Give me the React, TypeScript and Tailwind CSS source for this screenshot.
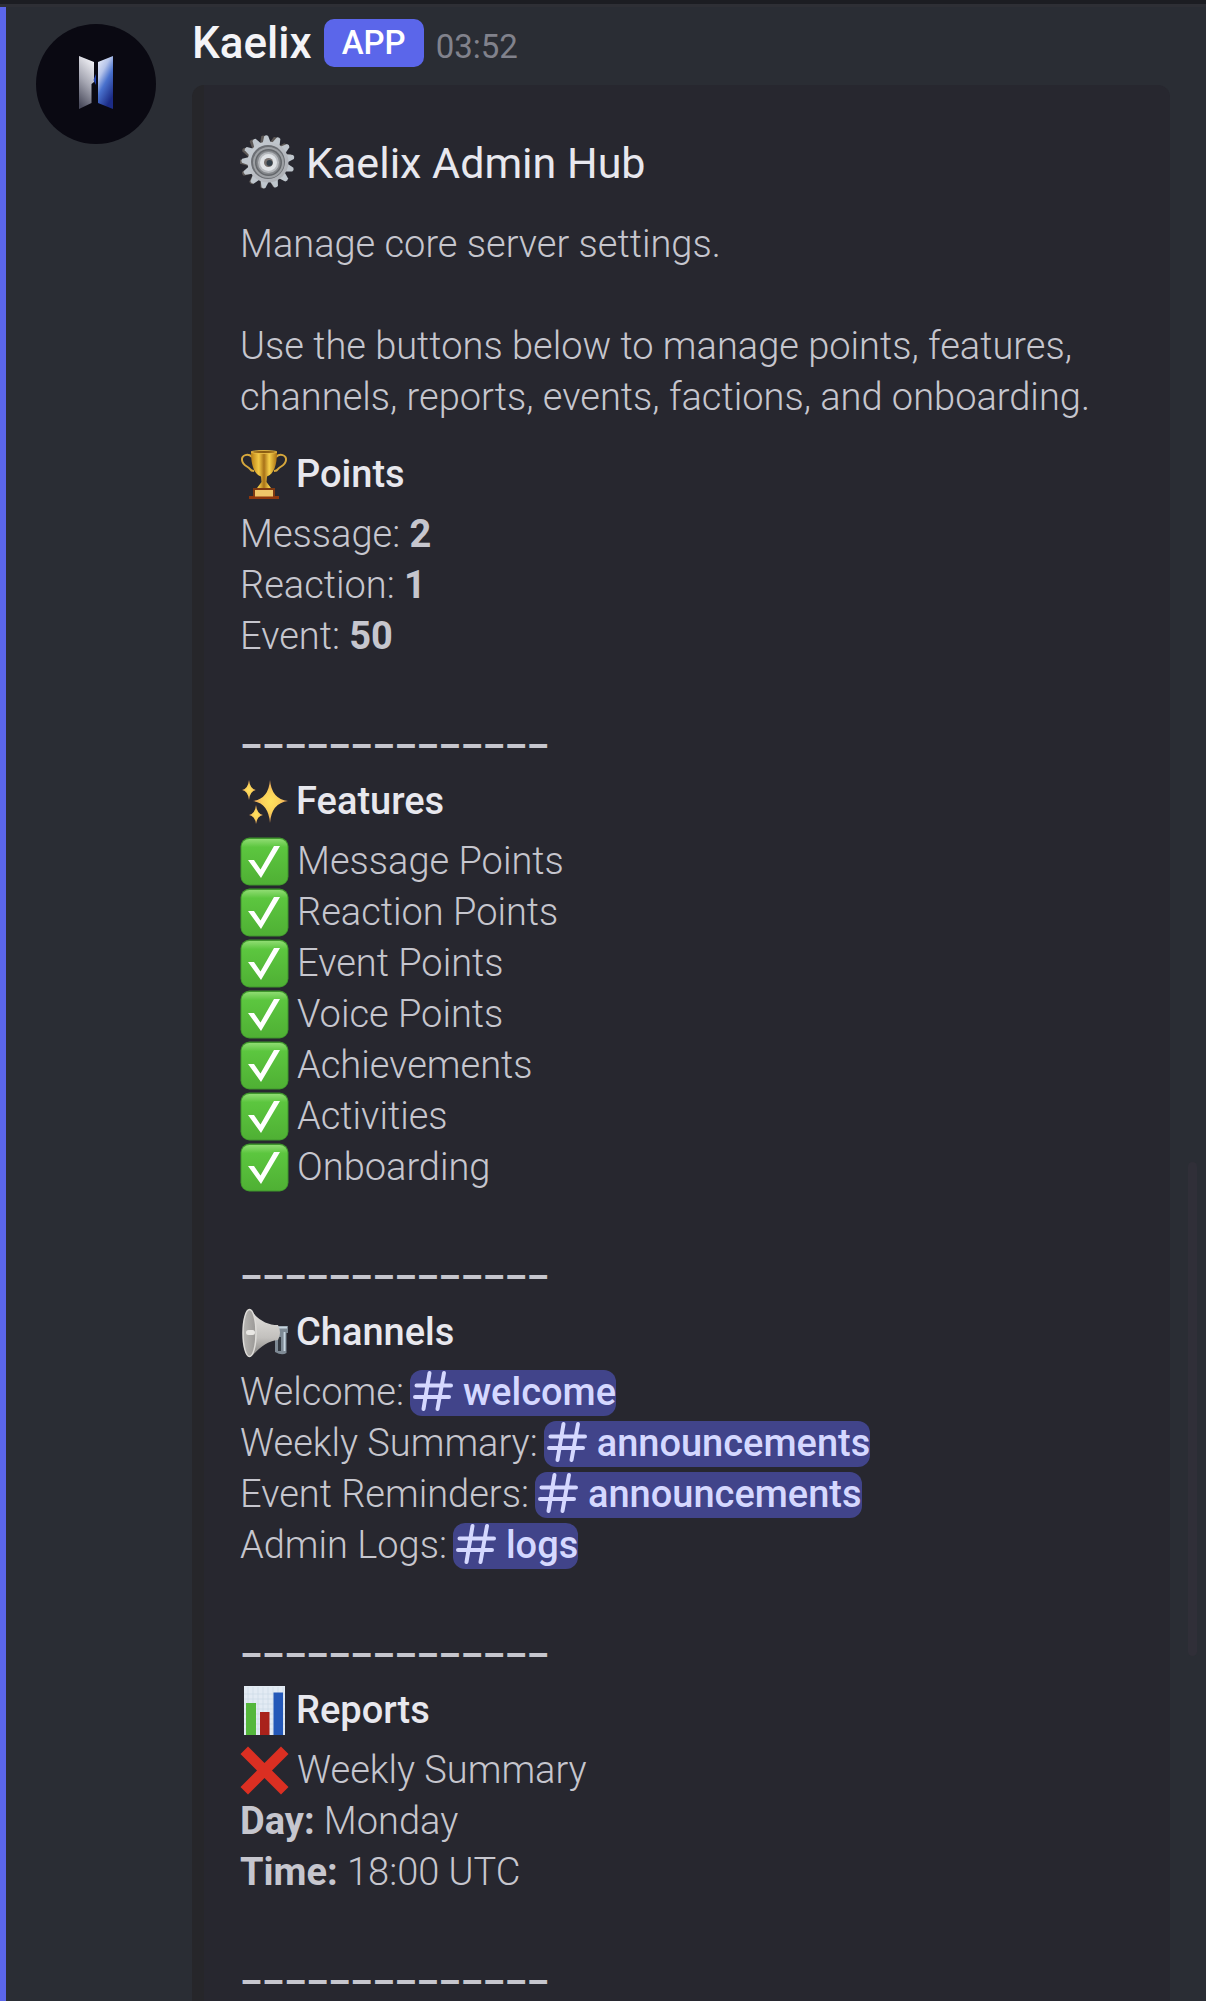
import type { ReactNode } from 'react';

const TEETH = Array.from({ length: 13 }, (_, i) => Math.round((i * 360) / 13));

function GearIcon() {
  return (
    <svg viewBox="0 0 56 56" className="size-14 shrink-0" aria-hidden="true">
      <defs>
        <linearGradient id="gear" x1="0" y1="0" x2="1" y2="1">
          <stop offset="0" stopColor="#c9cfd6" />
          <stop offset="1" stopColor="#a9abb0" />
        </linearGradient>
      </defs>
      <g fill="#5d5856">
        {TEETH.map(a => (
          <path key={a} d="M23 11 L25 1 Q27 -0.5 29 1 L31 11 Z" transform={`translate(-2 0) rotate(${a - 4} 28 27)`} />
        ))}
      </g>
      <g fill="#bfc6cd">
        {TEETH.map(a => (
          <path key={a} d="M23 11 L26 1 Q28 -0.5 30 1 L33 11 Z" transform={`rotate(${a - 4} 28 27)`} />
        ))}
      </g>
      <circle cx="28" cy="27" r="20.5" fill="url(#gear)" />
      <circle cx="28" cy="27" r="17" fill="#6d7075" />
      <circle cx="28.5" cy="27.500" r="15.5" fill="#9da0a4" />
      <circle cx="28.5" cy="27.500" r="13.5" fill="#65686c" />
      <circle cx="28.5" cy="27.500" r="12" fill="#85888c" />
      <circle cx="28.5" cy="27.500" r="10.5" fill="#b5b8bc" />
      <circle cx="28.5" cy="27.500" r="8.500" fill="#dfe2e5" />
      <circle cx="28.5" cy="27.500" r="4.500" fill="#77706d" />
      <circle cx="29.5" cy="28" r="3" fill="#34404a" />
    </svg>
  );
}

function TrophyIcon() {
  return (
    <svg viewBox="0 0 48 50" className="w-12 h-[50px] shrink-0" aria-hidden="true">
      <defs>
        <linearGradient id="cup" x1="0" x2="1">
          <stop offset="0" stopColor="#b87f16" />
          <stop offset="0.3" stopColor="#f3c945" />
          <stop offset="0.5" stopColor="#a87218" />
          <stop offset="0.7" stopColor="#f7d04a" />
          <stop offset="1" stopColor="#a86e12" />
        </linearGradient>
      </defs>
      <path d="M12 7 C8 3 1.500 5 2 10 C2.500 16 8 16 10 19 Q11 21 14 21" fill="none" stroke="#d6a73c" strokeWidth="2" />
      <path d="M36 7 C40 3 46.500 5 46 10 C45.500 16 40 16 38 19 Q37 21 34 21" fill="none" stroke="#d6a73c" strokeWidth="2" />
      <path d="M11 2 Q24 -1 37 2 C37 15 34 24 27 26.500 L26.500 32 L31 38 H17 L21.500 32 L21 26.500 C14 24 11 15 11 2 Z" fill="url(#cup)" />
      <ellipse cx="24" cy="2" rx="13" ry="1.500" fill="#8a5c12" stroke="#f2c64b" strokeWidth="0.800" />
      <path d="M13 38 H35 V46 H13 Z" fill="#7d3912" />
      <path d="M9 46 H39 V49 H9 Z" fill="#8e370d" />
      <rect x="15" y="40" width="18" height="6.500" fill="#efc669" />
    </svg>
  );
}

function SparklesIcon() {
  return (
    <svg viewBox="0 0 48 50" className="w-12 h-[50px] shrink-0" aria-hidden="true">
      <defs>
        <radialGradient id="spark">
          <stop offset="0" stopColor="#ffe25e" />
          <stop offset="0.5" stopColor="#fbd05a" />
          <stop offset="1" stopColor="#e49b5a" />
        </radialGradient>
      </defs>
      <g fill="url(#spark)">
        <path d="M30 3 Q31.500 22 48 24 Q31.500 26 30 46 Q28.500 26 13 24 Q28.500 22 30 3 Z" />
        <path d="M9 3 Q10 12 16 13 Q10 14 9 23 Q8 14 2 13 Q8 12 9 3 Z" />
        <path d="M16 28 Q17 37 23 38 Q17 39 16 47 Q15 39 9 38 Q15 37 16 28 Z" />
      </g>
    </svg>
  );
}

function CheckIcon() {
  return (
    <svg viewBox="0 0 49 49" className="size-[49px] shrink-0" aria-hidden="true">
      <defs>
        <linearGradient id="check" x1="0" y1="0" x2="0" y2="1">
          <stop offset="0" stopColor="#8fdc72" />
          <stop offset="0.18" stopColor="#5cc63f" />
          <stop offset="1" stopColor="#4fb034" />
        </linearGradient>
      </defs>
      <rect x="0.500" y="0.500" width="48" height="48" rx="9" fill="#3f962c" />
      <rect x="1.500" y="2" width="46" height="45.500" rx="8" fill="url(#check)" />
      <path d="M8 23 H14 L20.500 32.500 L34 9 H40 L21 41 Z" fill="#fff" />
    </svg>
  );
}

function MegaphoneIcon() {
  return (
    <svg viewBox="0 0 48 50" className="w-12 h-[50px] shrink-0" aria-hidden="true">
      <defs>
        <linearGradient id="horn" x1="0" y1="0" x2="0" y2="1">
          <stop offset="0" stopColor="#e6e4e1" />
          <stop offset="0.6" stopColor="#c2c0bd" />
          <stop offset="1" stopColor="#817f7d" />
        </linearGradient>
        <linearGradient id="bell" x1="0" x2="1">
          <stop offset="0" stopColor="#b9b7b4" />
          <stop offset="1" stopColor="#9a9896" />
        </linearGradient>
      </defs>
      <path d="M36 18 H48 V25 H46.500 V45 Q42 48 35 44 V30 Z" fill="#7e8a95" />
      <path d="M38 29 H41 V43 H38 Z" fill="#343a42" />
      <path d="M37 19.500 H47 M44.500 24 V43" stroke="#c7d5e0" strokeWidth="1.800" />
      <path d="M10 1 C18 12 27 17 38 17 Q42 25 38 32 C28 33 20 39 13 47 L9 49 Z" fill="url(#horn)" />
      <ellipse cx="9.500" cy="25" rx="6.500" ry="23.500" fill="url(#bell)" stroke="#dedcd9" strokeWidth="1.500" />
      <rect x="6" y="22" width="9" height="5" rx="2.500" fill="#e9e7e4" />
    </svg>
  );
}

function ChartIcon() {
  return (
    <svg viewBox="0 0 48 50" className="w-12 h-[50px] shrink-0" aria-hidden="true">
      <rect x="4" y="0" width="41" height="49" fill="#e3ebf4" />
      <g stroke="#c9d6e4" strokeWidth="0.600">
        {[8, 13, 18, 23, 28, 33, 38, 43].map(n => (
          <path key={n} d={`M${n} 1 V49 M4 ${n} H45`} />
        ))}
      </g>
      <rect x="6" y="17" width="10" height="32" fill="#55b73c" />
      <rect x="20" y="26" width="9.500" height="23" fill="#a9221b" />
      <rect x="33.500" y="6.500" width="9.500" height="42.500" fill="#2458b8" />
    </svg>
  );
}

function CrossIcon() {
  return (
    <svg viewBox="0 0 49 49" className="size-[49px] shrink-0" aria-hidden="true">
      <path d="M8 0.500 L24.500 17 L41 0.500 L48.500 8 L32 24.500 L48.500 41 L41 48.500 L24.500 32 L8 48.500 L0.500 41 L17 24.500 L0.500 8 Z" fill="#db2f22" />
    </svg>
  );
}

function HashIcon() {
  return (
    <svg viewBox="0 0 40 46" className="w-10 h-[46px] shrink-0" aria-hidden="true">
      <path d="M16.500 3 L10.500 39 M31 3 L24.500 39 M3.500 15.500 H38 M2 27 H36" stroke="#d5d8ff" strokeWidth="4" strokeLinecap="round" fill="none" />
    </svg>
  );
}

function Avatar() {
  return (
    <svg viewBox="0 0 120 120" className="size-[120px] shrink-0 mt-[17px]" role="img" aria-label="Kaelix">
      <defs>
        <linearGradient id="leftWing" x1="0.600" y1="0" x2="0.300" y2="1">
          <stop offset="0" stopColor="#f1f1f6" />
          <stop offset="0.5" stopColor="#a5a6b2" />
          <stop offset="1" stopColor="#4a4b5c" />
        </linearGradient>
        <linearGradient id="rightWing" x1="0" y1="0" x2="0.500" y2="1">
          <stop offset="0" stopColor="#f0f2fb" />
          <stop offset="0.35" stopColor="#b5c4ea" />
          <stop offset="0.6" stopColor="#4a72ce" />
          <stop offset="1" stopColor="#1c2c86" />
        </linearGradient>
      </defs>
      <circle cx="60" cy="60" r="60" fill="#0a0912" />
      <path d="M43 32 L58 38 V58 L55.500 60 V79 L43 85 Z" fill="url(#leftWing)" />
      <path d="M57.500 56 L60 50 V61 Z" fill="#2343b0" />
      <path d="M77 32 L62 38 V79 L77 85 Z" fill="url(#rightWing)" />
    </svg>
  );
}

function Field({ icon, title, children }: { icon: ReactNode; title: string; children: ReactNode }) {
  return (
    <section>
      <h3 className="flex items-center gap-2 h-[51px] mb-[9px] font-medium text-[#e8e8ee]">
        {icon}
        {title}
      </h3>
      {children}
      <div className="mt-[51px] h-[63px] pt-2 text-[35px] leading-[51px] font-bold whitespace-nowrap">––––––––––––––</div>
    </section>
  );
}

function Channel({ label, name }: { label: string; name: string }) {
  return (
    <div className="flex items-center gap-1.5 h-[51px]">
      {label}
      <a href={`#${name}`} className="flex items-center gap-2.5 h-[46px] pl-[3px] rounded-xl bg-[#41448a] font-medium text-[#d5d8ff]">
        <HashIcon />
        {name}
      </a>
    </div>
  );
}

const points = [
  { label: 'Message:', value: '2' },
  { label: 'Reaction:', value: '1' },
  { label: 'Event:', value: '50' },
];

const features = ['Message Points', 'Reaction Points', 'Event Points', 'Voice Points', 'Achievements', 'Activities', 'Onboarding'];

const channels = [
  { label: 'Welcome:', name: 'welcome' },
  { label: 'Weekly Summary:', name: 'announcements' },
  { label: 'Event Reminders:', name: 'announcements' },
  { label: 'Admin Logs:', name: 'logs' },
];

export default function App() {
  return (
    <div className="relative flex flex-col min-h-screen bg-[#2a2d34] font-['Roboto',sans-serif]">
      <div className="h-[7px] bg-[#2e2f35] border-t-4 border-[#1c1d22]" />

      <main className="flex flex-1 gap-9 pl-[30px] pr-9 border-l-6 border-[#5b66ea]">
        <Avatar />

        <article className="flex flex-col flex-1 min-w-0">
          <header className="flex items-center gap-3 h-12 mt-3 mb-[18px]">
            <h1 className="text-[44px] font-medium text-[#f4f4f7]">Kaelix</h1>
            <span className="flex items-center h-12 px-[18px] rounded-[10px] bg-[#5b66ea] text-[33px] font-medium text-white">APP</span>
            <time className="self-end text-[33px] leading-10 text-[#81828c]">03:52</time>
          </header>

          {/* Embed */}
          <div className="flex-1 pt-[49px] pl-9 pr-6 border-l-12 border-[#26262a] rounded-t-xl bg-[#27272f] text-[38px] leading-[51px] font-light text-[#c6c6ce]">
            <h2 className="flex items-center gap-2.5 h-[58px] mb-[27px] text-[43px] font-normal text-[#e8e8ee]">
              <GearIcon />
              Kaelix Admin Hub
            </h2>

            <p className="mb-[51px]">Manage core server settings.</p>
            <p className="mb-[26px]">Use the buttons below to manage points, features, channels, reports, events, factions, and onboarding.</p>

            <Field icon={<TrophyIcon />} title="Points">
              {points.map(p => (
                <div key={p.label}>{p.label} <b className="font-bold">{p.value}</b></div>
              ))}
            </Field>

            <Field icon={<SparklesIcon />} title="Features">
              {features.map(f => (
                <div key={f} className="flex items-center gap-2 h-[51px]">
                  <CheckIcon />
                  {f}
                </div>
              ))}
            </Field>

            <Field icon={<MegaphoneIcon />} title="Channels">
              {channels.map(c => <Channel key={c.label} label={c.label} name={c.name} />)}
            </Field>

            <Field icon={<ChartIcon />} title="Reports">
              <div className="flex items-center gap-2 h-[51px]">
                <CrossIcon />
                Weekly Summary
              </div>
              <div><b className="font-bold">Day:</b> Monday</div>
              <div><b className="font-bold">Time:</b> 18:00 UTC</div>
            </Field>
          </div>
        </article>
      </main>

      {/* Scroll thumb */}
      <div className="absolute right-[9px] top-[1162px] w-[9px] h-[494px] rounded-full bg-[#302f38]" />
    </div>
  );
}
